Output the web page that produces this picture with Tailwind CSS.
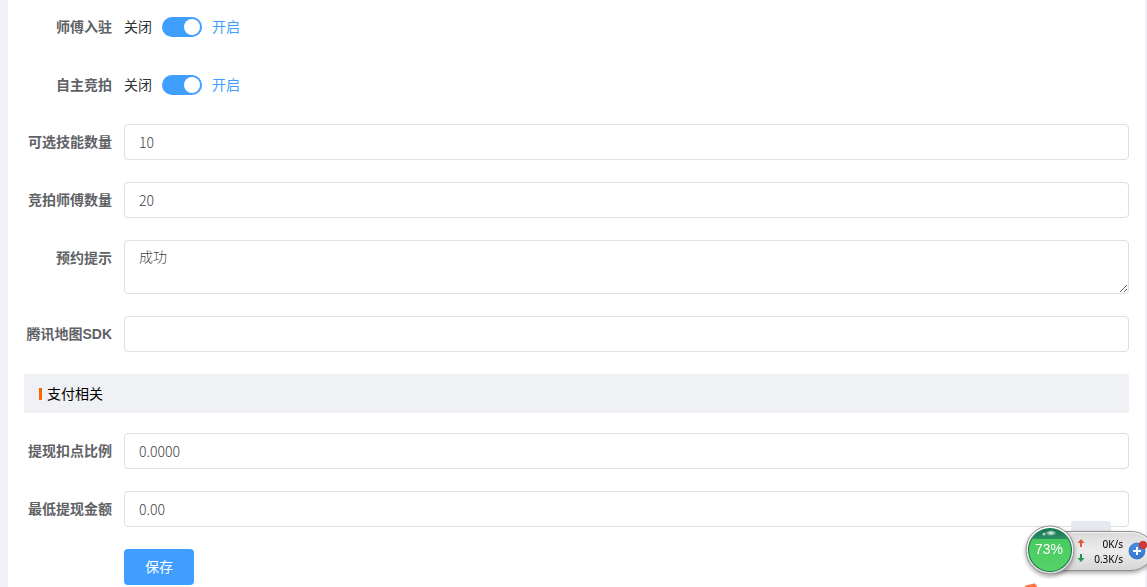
<!DOCTYPE html>
<html lang="zh-CN">
<head>
  <meta charset="UTF-8" />
  <meta name="viewport" content="width=device-width, initial-scale=1.0" />
  <title>系统设置</title>
  <script src="https://cdn.jsdelivr.net/npm/@tailwindcss/browser@4"></script>
</head>
<body class="relative min-h-screen overflow-hidden bg-[#f0f1f6] pl-2 pr-[2px] font-['Liberation_Sans','Noto_Sans_CJK_SC',sans-serif] text-sm text-[#606266]">
  <main class="min-h-screen bg-white pt-2 pl-4 pr-4">
    <form>
      <!-- switches -->
      <div class="mb-5 flex h-[38px] items-center">
        <label for="masterJoin" class="w-[100px] shrink-0 pr-3 text-right font-bold">师傅入驻</label>
        <div class="flex items-center gap-[10px]">
          <span class="text-[#303133]">关闭</span>
          <input id="masterJoin" type="checkbox" role="switch" checked class="h-5 w-10 appearance-none rounded-full bg-[#dcdfe6] p-[2px] before:block before:size-4 before:rounded-full before:bg-white checked:bg-[#409eff] checked:before:ml-5" />
          <span class="text-[#409eff]">开启</span>
        </div>
      </div>
      <div class="mb-5 flex h-[38px] items-center">
        <label for="selfAuction" class="w-[100px] shrink-0 pr-3 text-right font-bold">自主竞拍</label>
        <div class="flex items-center gap-[10px]">
          <span class="text-[#303133]">关闭</span>
          <input id="selfAuction" type="checkbox" role="switch" checked class="h-5 w-10 appearance-none rounded-full bg-[#dcdfe6] p-[2px] before:block before:size-4 before:rounded-full before:bg-white checked:bg-[#409eff] checked:before:ml-5" />
          <span class="text-[#409eff]">开启</span>
        </div>
      </div>

      <!-- basic fields -->
      <div class="mb-[22px] flex">
        <label for="skillCount" class="w-[100px] shrink-0 pr-3 text-right leading-9 font-bold">可选技能数量</label>
        <input id="skillCount" type="text" value="10" class="h-9 min-w-0 flex-1 rounded border border-[#dcdfe6] bg-white px-[14px] font-['Noto_Sans_CJK_SC',sans-serif] font-light text-[#404246] outline-none focus:border-[#409eff]" />
      </div>
      <div class="mb-[22px] flex">
        <label for="masterCount" class="w-[100px] shrink-0 pr-3 text-right leading-9 font-bold">竞拍师傅数量</label>
        <input id="masterCount" type="text" value="20" class="h-9 min-w-0 flex-1 rounded border border-[#dcdfe6] bg-white px-[14px] font-['Noto_Sans_CJK_SC',sans-serif] font-light text-[#404246] outline-none focus:border-[#409eff]" />
      </div>
      <div class="mb-[22px] flex">
        <label for="bookTip" class="w-[100px] shrink-0 pr-3 text-right leading-9 font-bold">预约提示</label>
        <textarea id="bookTip" rows="2" class="min-w-0 flex-1 resize-y rounded border border-[#dcdfe6] bg-white px-[14px] py-[5px] font-['Noto_Sans_CJK_SC',sans-serif] leading-[21px] font-light text-[#404246] outline-none focus:border-[#409eff]">成功</textarea>
      </div>
      <div class="mb-[22px] flex">
        <label for="mapSdk" class="w-[100px] shrink-0 pr-3 text-right leading-9 font-bold">腾讯地图SDK</label>
        <input id="mapSdk" type="text" class="h-9 min-w-0 flex-1 rounded border border-[#dcdfe6] bg-white px-[14px] font-['Noto_Sans_CJK_SC',sans-serif] font-light text-[#404246] outline-none focus:border-[#409eff]" />
      </div>

      <!-- payment -->
      <div class="mb-5 flex h-[39px] items-center gap-[5px] bg-[#f0f1f5] px-[15px]">
        <span class="h-3 w-[3px] bg-[#ff6600]"></span>
        <h2 class="text-black">支付相关</h2>
      </div>
      <div class="mb-[22px] flex">
        <label for="withdrawRate" class="w-[100px] shrink-0 pr-3 text-right leading-9 font-bold">提现扣点比例</label>
        <input id="withdrawRate" type="text" value="0.0000" class="h-9 min-w-0 flex-1 rounded border border-[#dcdfe6] bg-white px-[14px] font-['Noto_Sans_CJK_SC',sans-serif] font-light text-[#404246] outline-none focus:border-[#409eff]" />
      </div>
      <div class="mb-[22px] flex">
        <label for="withdrawMin" class="w-[100px] shrink-0 pr-3 text-right leading-9 font-bold">最低提现金额</label>
        <input id="withdrawMin" type="text" value="0.00" class="h-9 min-w-0 flex-1 rounded border border-[#dcdfe6] bg-white px-[14px] font-['Noto_Sans_CJK_SC',sans-serif] font-light text-[#404246] outline-none focus:border-[#409eff]" />
      </div>
      <div class="pl-[100px]">
        <button type="button" class="h-9 rounded bg-[#409eff] px-[21px] text-white hover:bg-[#66b1ff]">保存</button>
      </div>
    </form>
  </main>

  <!-- floating network monitor -->
  <div class="fixed right-9 bottom-14 h-[10px] w-10 rounded-t-[3px] bg-[#e6e9f0]"></div>
  <svg class="fixed right-[108px] bottom-0" width="16" height="4" viewBox="0 0 16 4"><path d="M1 3 11 .5Q13 .2 14 4H3z" fill="#ff7340" /></svg>
  <aside class="fixed right-0 bottom-2 h-[58px] w-[126px]">
    <svg class="absolute inset-0" width="126" height="58" viewBox="0 0 126 58">
      <defs>
        <linearGradient id="bar" x1="0" y1="0" x2="0" y2="1"><stop offset="0" stop-color="#dadada" /><stop offset=".5" stop-color="#ececec" /><stop offset="1" stop-color="#d6d6d6" /></linearGradient>
        <linearGradient id="ring" x1="0" y1="0" x2="0" y2="1"><stop offset="0" stop-color="#fff" /><stop offset="1" stop-color="#d8d8d8" /></linearGradient>
        <linearGradient id="ball" x1="0" y1="0" x2="0" y2="1"><stop offset="0" stop-color="#45c75e" /><stop offset="1" stop-color="#55d468" /></linearGradient>
        <linearGradient id="cap" x1="0" y1="0" x2="0" y2="1"><stop offset="0" stop-color="#0c6b4c" /><stop offset="1" stop-color="#2f9068" /></linearGradient>
        <linearGradient id="plus" x1="0" y1="0" x2="0" y2="1"><stop offset="0" stop-color="#4b8fe2" /><stop offset="1" stop-color="#3577d3" /></linearGradient>
        <radialGradient id="shine"><stop offset="0" stop-color="#fff" /><stop offset="1" stop-color="#fff" stop-opacity="0" /></radialGradient>
        <filter id="shadow" x="-20%" y="-20%" width="140%" height="150%"><feDropShadow dx="0" dy="2" stdDeviation="2" flood-color="#000" flood-opacity=".35" /></filter>
        <clipPath id="ballClip"><circle cx="29" cy="29" r="21" /></clipPath>
      </defs>
      <path d="M30 10.500H110Q120 10.500 128 18V41Q120 49.500 110 49.500H30z" fill="url(#bar)" stroke="#8f8f8f" filter="url(#shadow)" />
      <path d="M50 11.500H110Q119 11.500 126 18" fill="none" stroke="#f5f5f5" />
      <circle cx="29" cy="29" r="24" fill="url(#ring)" stroke="#8f8f8f" filter="url(#shadow)" />
      <circle cx="29" cy="29" r="22" fill="#13734c" />
      <circle cx="29" cy="29" r="21" fill="url(#ball)" />
      <path d="M7 7H51V18H7z" fill="url(#cap)" clip-path="url(#ballClip)" />
      <ellipse cx="30" cy="12" rx="6" ry="3" fill="url(#shine)" />
      <circle cx="23" cy="13" r="1.500" fill="#fff" opacity=".65" />
      <path d="m60 18 3.500 4h-2.500v4h-2v-4h-2.500z" fill="#e8533b" />
      <path d="m60 41 3.500-4h-2.500v-4h-2v4h-2.500z" fill="#22994f" />
      <circle cx="116" cy="30" r="8" fill="url(#plus)" stroke="#2d67bc" stroke-width=".7" />
      <path d="M116 26v8M112 30h8" stroke="#fff" stroke-width="2" />
      <circle cx="122" cy="24" r="3.800" fill="#d93636" stroke="#a72c2c" stroke-width=".6" />
    </svg>
    <span class="absolute top-5 left-[5px] w-[46px] text-center text-sm leading-4 text-white">73%</span>
    <div class="absolute top-4 right-6 text-right font-['Noto_Sans',sans-serif] text-[10px] leading-[15px] text-black">
      <p>0K/s</p>
      <p>0.3K/s</p>
    </div>
  </aside>
</body>
</html>
